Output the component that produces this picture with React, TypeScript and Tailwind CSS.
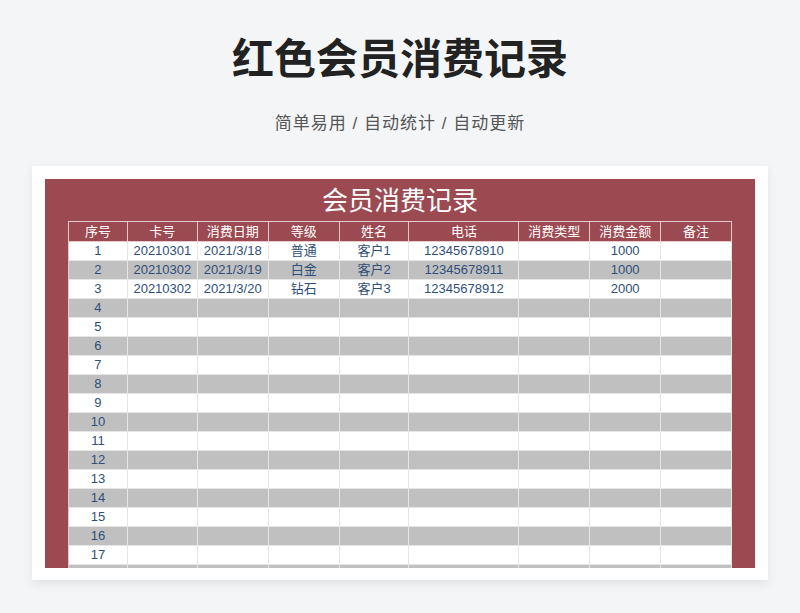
const cols = [59, 70, 71, 71, 70, 110, 71, 71, 71];
const heads = ["序号", "卡号", "消费日期", "等级", "姓名", "电话", "消费类型", "消费金额", "备注"];
const data: string[][] = [
  ["1", "20210301", "2021/3/18", "普通", "客户1", "12345678910", "", "1000", ""],
  ["2", "20210302", "2021/3/19", "白金", "客户2", "12345678911", "", "1000", ""],
  ["3", "20210302", "2021/3/20", "钻石", "客户3", "12345678912", "", "2000", ""],
];
const rows: string[][] = [];
for (let i = 0; i < 18; i++) rows.push(data[i] ?? [i < 17 ? String(i + 1) : "", "", "", "", "", "", "", "", ""]);
const font = { fontFamily: '"Liberation Sans","Noto Sans CJK SC",sans-serif' };

export default function App() {
  return (
    <div className="w-[800px] h-[613px] bg-[#f3f5f7] overflow-hidden" style={font}>
      <div className="h-[166px] flex flex-col items-center">
        <div className="mt-[33px] text-[42px] leading-[54px] font-bold text-[#222]">红色会员消费记录</div>
        <div className="mt-[25px] text-[17px] leading-[24px] text-[#555] tracking-[1px]">简单易用 / 自动统计 / 自动更新</div>
      </div>
      <div className="ml-[32px] w-[736px] h-[414px] bg-white shadow-[0_4px_10px_rgba(0,0,0,0.08)] pt-[13px] pl-[13px]">
        <div className="w-[710px] h-[389px] bg-[#9c4a52] overflow-hidden">
          <div className="h-[42px] flex items-center justify-center text-white text-[26px] pt-[2px]">会员消费记录</div>
          <div className="ml-[23px] w-[664px] border-t border-l border-[#e9c9cc]">
            <div className="flex h-[20px]">
              {heads.map((h, i) => (
                <div key={i} style={{ width: cols[i] }} className="border-r border-b border-[#e9c9cc] text-white text-[13px] leading-[19px] text-center">{h}</div>
              ))}
            </div>
            {rows.map((r, ri) => (
              <div key={ri} className={`flex h-[19px] ${ri % 2 === 1 ? "bg-[#c0c0c0]" : "bg-white"}`}>
                {r.map((c, i) => (
                  <div key={i} style={{ width: cols[i] }} className="border-r border-b border-[#e6e6e6] text-[#2f4f7a] text-[13px] leading-[18px] text-center">{c}</div>
                ))}
              </div>
            ))}
          </div>
        </div>
      </div>
    </div>
  );
}
